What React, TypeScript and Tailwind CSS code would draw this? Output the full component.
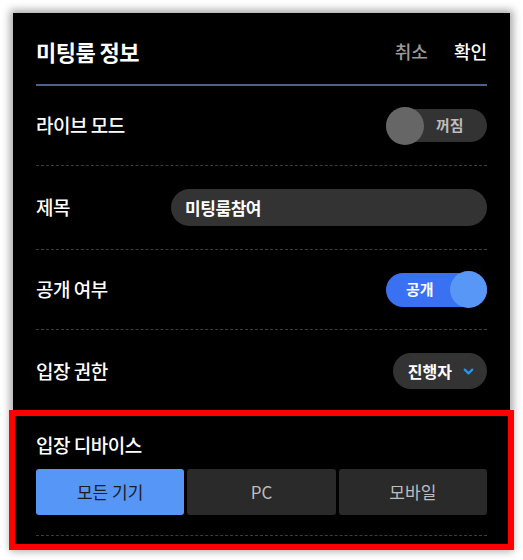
import { ChevronDown } from 'lucide-react';

const font = { fontFamily: '"Noto Sans CJK KR", "Noto Sans", sans-serif' };

function Divider() {
    return <div className="border-t border-dashed border-[#3c3c3c]" />;
}

function Row({ label, h, children }: { label: string; h: string; children: React.ReactNode }) {
    return (
        <div className={`flex items-center justify-between ${h}`}>
            <span className="text-[19px] font-medium text-white tracking-tight">{label}</span>
            {children}
        </div>
    );
}

export default function App() {
    return (
        <div className="min-h-[560px] bg-white pt-[13px] px-[13px]" style={font}>
            <div className="relative h-[535px] bg-black px-[23px] shadow-[0_0_8px_3px_rgba(0,0,0,0.35)]">
                <div className="flex h-[73px] items-center justify-between border-b-2 border-[#4d6188] pt-[5px]">
                    <span className="text-[22px] font-bold text-white tracking-tight">미팅룸 정보</span>
                    <div className="flex items-center gap-[26px] text-[18px] font-medium">
                        <span className="text-[#9a9a9a]">취소</span>
                        <span className="text-white">확인</span>
                    </div>
                </div>

                <Row label="라이브 모드" h="h-[79px]">
                    <div className="relative flex h-[33px] w-[101px] items-center rounded-full bg-[#333333]">
                        <div className="absolute left-0 h-[38px] w-[38px] rounded-full bg-[#666666]" />
                        <span className="ml-[50px] text-[15px] font-bold text-[#bdbdbd]">꺼짐</span>
                    </div>
                </Row>
                <Divider />

                <Row label="제목" h="h-[83px]">
                    <div className="flex h-[37px] w-[316px] items-center rounded-full bg-[#333333] px-[14px]">
                        <span className="text-[17px] font-bold text-white tracking-tight">미팅룸참여</span>
                    </div>
                </Row>
                <Divider />

                <Row label="공개 여부" h="h-[79px]">
                    <div className="relative flex h-[34px] w-[101px] items-center rounded-full bg-[#3a70f2]">
                        <span className="ml-[20px] text-[15px] font-bold text-white">공개</span>
                        <div className="absolute right-0 h-[37px] w-[37px] rounded-full bg-[#5897f6]" />
                    </div>
                </Row>
                <Divider />

                <Row label="입장 권한" h="h-[82px]">
                    <div className="flex h-[36px] items-center gap-[9px] rounded-full bg-[#333333] pl-[15px] pr-[11px]">
                        <span className="text-[16px] font-bold text-white">진행자</span>
                        <ChevronDown className="h-[15px] w-[15px] text-[#2299f0]" strokeWidth={3.5} />
                    </div>
                </Row>

                <div className="pt-[20px] pb-[20px]">
                    <div className="mb-[11px] text-[19px] font-medium leading-[26px] text-white tracking-tight">입장 디바이스</div>
                    <div className="grid grid-cols-3 gap-[3px]">
                        <div className="flex h-[46px] items-center justify-center rounded-[3px] bg-[#5596f7] text-[17px] text-[#1c1c1c]">
                            모든 기기
                        </div>
                        <div className="flex h-[46px] items-center justify-center rounded-[3px] bg-[#2a2a2a] text-[17px] text-[#bdbdbd]">
                            PC
                        </div>
                        <div className="flex h-[46px] items-center justify-center rounded-[3px] bg-[#2a2a2a] text-[17px] text-[#bdbdbd]">
                            모바일
                        </div>
                    </div>
                </div>
                <Divider />

                <div className="pointer-events-none absolute left-[-4px] top-[397px] h-[140px] w-[505px] border-[6px] border-[#ff0000]" />
            </div>
        </div>
    );
}
